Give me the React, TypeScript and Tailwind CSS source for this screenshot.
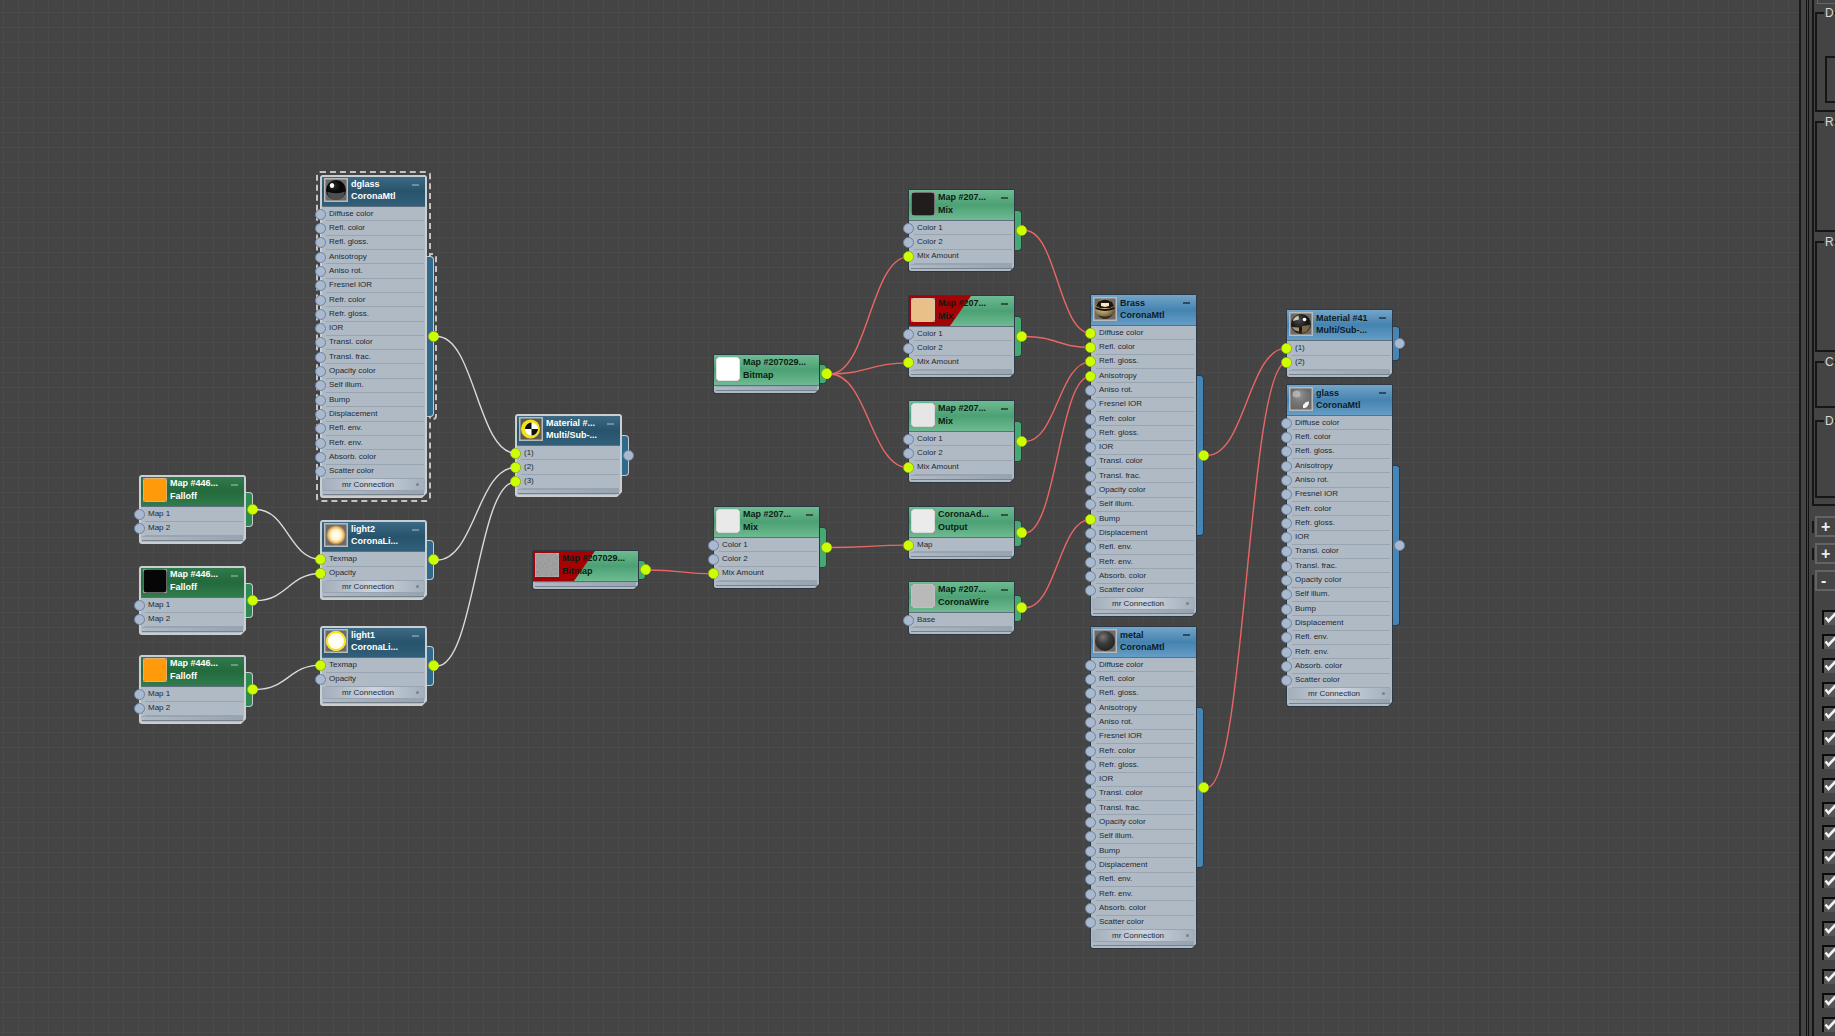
import { useState } from "react";
import clsx from "clsx";

type Tone = "material" | "materialDark" | "map" | "mapDark";

type NodeDef = {
  id: string;
  x: number;
  y: number;
  title: string;
  type: string;
  tone: Tone;
  thumb: string;
  inputs: string[];
  linked?: number[];
  outLinked?: boolean;
  mr?: boolean;
  warn?: boolean;
  active?: boolean;
};

const NODE_W = 107;
const HEADER_H = 32;
const MR_H = 11;
const FOOTER_H = 8;

const CORONA = [
  "Diffuse color",
  "Refl. color",
  "Refl. gloss.",
  "Anisotropy",
  "Aniso rot.",
  "Fresnel IOR",
  "Refr. color",
  "Refr. gloss.",
  "IOR",
  "Transl. color",
  "Transl. frac.",
  "Opacity color",
  "Self illum.",
  "Bump",
  "Displacement",
  "Refl. env.",
  "Refr. env.",
  "Absorb. color",
  "Scatter color",
];
const MIX = ["Color 1", "Color 2", "Mix Amount"];
const FALLOFF = ["Map 1", "Map 2"];
const LIGHT = ["Texmap", "Opacity"];

const NODES: NodeDef[] = [
  { id: "dglass", x: 320, y: 175, title: "dglass", type: "CoronaMtl", tone: "materialDark", thumb: "black-ball", inputs: CORONA, outLinked: true, mr: true, active: true },
  { id: "light2", x: 320, y: 520, title: "light2", type: "CoronaLi...", tone: "materialDark", thumb: "light-warm", inputs: LIGHT, linked: [0, 1], outLinked: true, mr: true },
  { id: "light1", x: 320, y: 626, title: "light1", type: "CoronaLi...", tone: "materialDark", thumb: "light-yellow", inputs: LIGHT, linked: [0], outLinked: true, mr: true },
  { id: "fall1", x: 139, y: 475, title: "Map #446...", type: "Falloff", tone: "mapDark", thumb: "#ff9a0b", inputs: FALLOFF, outLinked: true },
  { id: "fall2", x: 139, y: 566, title: "Map #446...", type: "Falloff", tone: "mapDark", thumb: "#060606", inputs: FALLOFF, outLinked: true },
  { id: "fall3", x: 139, y: 655, title: "Map #446...", type: "Falloff", tone: "mapDark", thumb: "#ff9a0b", inputs: FALLOFF, outLinked: true },
  { id: "multi", x: 515, y: 414, title: "Material #...", type: "Multi/Sub-...", tone: "materialDark", thumb: "checker", inputs: ["(1)", "(2)", "(3)"], linked: [0, 1, 2] },
  { id: "bmpRed", x: 532, y: 550, title: "Map #207029...", type: "Bitmap", tone: "map", thumb: "noise", inputs: [], outLinked: true, warn: true },
  { id: "bmp", x: 713, y: 354, title: "Map #207029...", type: "Bitmap", tone: "map", thumb: "#ffffff", inputs: [], outLinked: true },
  { id: "mix4", x: 713, y: 506, title: "Map #207...", type: "Mix", tone: "map", thumb: "#e9e9e9", inputs: MIX, linked: [2], outLinked: true },
  { id: "mix1", x: 908, y: 189, title: "Map #207...", type: "Mix", tone: "map", thumb: "#211d1c", inputs: MIX, linked: [2], outLinked: true },
  { id: "mix2", x: 908, y: 295, title: "Map #207...", type: "Mix", tone: "map", thumb: "#e8c088", inputs: MIX, linked: [2], outLinked: true, warn: true },
  { id: "mix3", x: 908, y: 400, title: "Map #207...", type: "Mix", tone: "map", thumb: "#e6e6e6", inputs: MIX, linked: [2], outLinked: true },
  { id: "output", x: 908, y: 506, title: "CoronaAd...", type: "Output", tone: "map", thumb: "#ebebeb", inputs: ["Map"], linked: [0], outLinked: true },
  { id: "wire", x: 908, y: 581, title: "Map #207...", type: "CoronaWire", tone: "map", thumb: "#b9b9b9", inputs: ["Base"], outLinked: true },
  { id: "brass", x: 1090, y: 294, title: "Brass", type: "CoronaMtl", tone: "material", thumb: "brass-ball", inputs: CORONA, linked: [0, 1, 2, 3, 13], outLinked: true, mr: true },
  { id: "metal", x: 1090, y: 626, title: "metal", type: "CoronaMtl", tone: "material", thumb: "metal-ball", inputs: CORONA, outLinked: true, mr: true },
  { id: "mat41", x: 1286, y: 309, title: "Material #41", type: "Multi/Sub-...", tone: "material", thumb: "multi-ball", inputs: ["(1)", "(2)"], linked: [0, 1] },
  { id: "glass", x: 1286, y: 384, title: "glass", type: "CoronaMtl", tone: "material", thumb: "glass-ball", inputs: CORONA, mr: true },
];

const WIRES: [string, string, number][] = [
  ["dglass", "multi", 0],
  ["light2", "multi", 1],
  ["light1", "multi", 2],
  ["fall1", "light2", 0],
  ["fall2", "light2", 1],
  ["fall3", "light1", 0],
  ["bmpRed", "mix4", 2],
  ["mix4", "output", 0],
  ["bmp", "mix1", 2],
  ["bmp", "mix2", 2],
  ["bmp", "mix3", 2],
  ["mix1", "brass", 0],
  ["mix2", "brass", 1],
  ["mix3", "brass", 2],
  ["output", "brass", 3],
  ["wire", "brass", 13],
  ["brass", "mat41", 0],
  ["metal", "mat41", 1],
];

const HEADER: Record<Tone, string> = {
  material: "bg-linear-to-b from-[#74a5c9] via-[#4583b0] to-[#659dc6] text-[#0d1a26]",
  materialDark: "bg-linear-to-b from-[#3c6a84] via-[#28536c] to-[#315f79] text-white",
  map: "bg-linear-to-b from-[#6fba92] via-[#4ba173] to-[#6fba92] text-[#0b1c12]",
  mapDark: "bg-linear-to-b from-[#307a4b] via-[#236a3d] to-[#317c4c] text-white",
};

const TAB: Record<Tone, string> = {
  material: "bg-[#4686b6] border-[#2a3b48]",
  materialDark: "bg-[#2f6a8d] border-[#c6cbd0]",
  map: "bg-[#46a873] border-[#2b4437]",
  mapDark: "bg-[#2c8a50] border-[#c6cbd0]",
};

function rowsHeight(n: number) {
  return Math.round((n * 43) / 3);
}

function nodeHeight(n: NodeDef) {
  return HEADER_H + rowsHeight(n.inputs.length) + (n.mr ? MR_H : 0) + FOOTER_H;
}

function outPort(n: NodeDef) {
  return { x: n.x + NODE_W + 7, y: n.y + nodeHeight(n) / 2 };
}

function inPort(n: NodeDef, slot: number) {
  return { x: n.x + 0.5, y: n.y + HEADER_H + ((slot + 0.5) * 43) / 3 };
}

function wirePath(from: NodeDef, to: NodeDef, slot: number) {
  const a = outPort(from);
  const b = inPort(to, slot);
  const x1 = a.x + 3;
  const c = (b.x - x1) * 0.48;
  return `M${x1} ${a.y} C${x1 + c} ${a.y} ${b.x - c} ${b.y} ${b.x} ${b.y}`;
}

function Ball({
  id,
  stops,
  centered,
  children,
}: {
  id: string;
  stops: [string, string][];
  centered?: boolean;
  children?: React.ReactNode;
}) {
  return (
    <svg viewBox="0 0 24 24" className="size-6">
      <defs>
        <radialGradient id={id} cx={centered ? "0.5" : "0.4"} cy={centered ? "0.5" : "0.3"} r={centered ? "0.5" : "0.75"}>
          {stops.map(([o, c]) => (
            <stop key={o} offset={o} stopColor={c} />
          ))}
        </radialGradient>
      </defs>
      <rect width="24" height="24" fill="#b9b9b9" />
      <rect x="1.5" y="1.5" width="21" height="21" fill="#6d6a68" />
      <circle cx="12" cy="12" r="10" fill={`url(#${id})`} />
      {children}
    </svg>
  );
}

function Thumb({ kind }: { kind: string }) {
  switch (kind) {
    case "black-ball":
      return (
        <Ball id="g-black" stops={[["0", "#2a2a2a"], ["0.5", "#050505"], ["1", "#1c1c1c"]]}>
          <path d="M3 13q9 4 18 0l-1 4q-3 5-8 5t-8-5z" fill="#4e4e50" />
          <path d="M2.500 11.500q9.500 3 19 0v2q-9.500 3.500-19 0z" fill="#0a0a0a" />
          <ellipse cx="8" cy="7.500" rx="2.200" ry="2.600" fill="#fff" />
        </Ball>
      );
    case "brass-ball":
      return (
        <Ball id="g-brass" stops={[["0", "#f0dfb4"], ["0.5", "#b59a68"], ["1", "#4a3c26"]]}>
          <path d="M5 5q7-5 14 0l2 4-4 2H7L3 9z" fill="#1a1712" />
          <path d="M8 6h8v3l-4 1-4-1z" fill="#f5e9c8" />
          <path d="M2.500 10q9.500 4 19 0v2q-9.500 4-19 0z" fill="#17120c" />
          <path d="M5 18q7 3 14 0-3 4-7 4t-7-4z" fill="#3b2f1d" />
        </Ball>
      );
    case "metal-ball":
      return <Ball id="g-metal" stops={[["0", "#777"], ["0.45", "#3c3c3c"], ["1", "#202020"]]} />;
    case "multi-ball":
      return (
        <Ball id="g-multi" stops={[["0", "#4a4a4a"], ["0.6", "#141414"], ["1", "#2a2a2a"]]}>
          <path d="M4.500 7q2-3 5-3.500l.5 4-6 1.500z" fill="#cfc6b2" />
          <path d="M13 14l8-1q-1 7-8 8z" fill="#7d6842" />
          <path d="M3 15l7 .5v4q-5-.5-7-4.500z" fill="#a8946c" />
          <circle cx="15.500" cy="7.500" r="1.800" fill="#fff" />
        </Ball>
      );
    case "glass-ball":
      return (
        <Ball id="g-glass" stops={[["0", "#969696"], ["0.5", "#777"], ["1", "#666"]]}>
          <ellipse cx="7.500" cy="7" rx="4" ry="3.500" fill="#c0c0c0" opacity="0.700" />
          <path d="M14 18l3-3 3-.5q.5 3-2 5.500-2 1.500-4 1z" fill="#f3f3f3" />
        </Ball>
      );
    case "light-warm":
      return <Ball id="g-warm" centered stops={[["0", "#fffef5"], ["0.5", "#fff6d0"], ["0.75", "#f3c26c"], ["1", "#7d6a58"]]} />;
    case "light-yellow":
      return (
        <Ball id="g-yellow" centered stops={[["0", "#ffffff"], ["1", "#fffbe0"]]}>
          <circle cx="12" cy="12" r="9" fill="none" stroke="#f2e51f" strokeWidth="2" />
        </Ball>
      );
    case "checker":
      return (
        <svg viewBox="0 0 24 24" className="size-6">
          <rect width="24" height="24" fill="#b9b9b9" />
          <rect x="1.500" y="1.500" width="21" height="21" fill="#5c5a50" />
          <circle cx="11.500" cy="12" r="9.500" fill="#f2e21a" />
          <circle cx="12.500" cy="12" r="6.500" fill="#fff" />
          <path d="M12.500 5.500v6.500H6a6.500 6.500 0 0 1 6.500-6.500zM12.500 18.500V12H19a6.500 6.500 0 0 1-6.500 6.500z" fill="#101010" />
        </svg>
      );
    case "noise":
      return (
        <svg viewBox="0 0 24 24" className="size-6">
          <filter id="grain">
            <feTurbulence type="fractalNoise" baseFrequency="0.5" numOctaves="2" />
            <feColorMatrix type="saturate" values="0" />
            <feComponentTransfer>
              <feFuncA type="linear" slope="0" intercept="0.25" />
            </feComponentTransfer>
          </filter>
          <rect width="24" height="24" fill="#b0b0b0" />
          <rect x="0.500" y="0.500" width="23" height="23" rx="2" fill="#949494" />
          <rect x="1" y="1" width="22" height="22" filter="url(#grain)" />
        </svg>
      );
    default:
      return (
        <svg viewBox="0 0 24 24" className="size-6">
          <rect width="24" height="24" fill="#c3c9c6" />
          <path d="M0 0h2v2H0zM22 0h2v2h-2zM0 22h2v2H0zM22 22h2v2h-2z" fill="#a58f94" />
          <rect x="0.500" y="0.500" width="23" height="23" rx="3" fill={kind} />
        </svg>
      );
  }
}

function Port({ on }: { on?: boolean }) {
  return (
    <span
      className={clsx(
        "block size-[11px] shrink-0 rounded-full border",
        on ? "border-[#8fae1c] bg-[#ccff00]" : "border-[#6e83a0] bg-[#a9b9d0]"
      )}
    />
  );
}

function MaterialNode({ node }: { node: NodeDef }) {
  const [open, setOpen] = useState(true);
  const selected = node.tone === "materialDark" || node.tone === "mapDark";
  const isMap = node.tone === "map" || node.tone === "mapDark";

  return (
    <section className="absolute w-[107px]" style={{ left: node.x, top: node.y }}>
      {/* Selection outline */}
      {node.active && (
        <>
          <div className="absolute left-full top-1/4 -mt-[3px] h-[calc(50%+6px)] w-[10px] rounded-r-[4px] border-2 border-l-0 border-dashed border-[#c4c4c4]" />
          <div className="absolute -inset-[4px] rounded-[4px] border-2 border-dashed border-[#c4c4c4] bg-[#444444]" />
        </>
      )}

      {/* Output tab */}
      <div
        className={clsx(
          "absolute left-full top-1/4 -ml-[2px] h-1/2 w-[9px] rounded-r-[4px] border border-l-0",
          TAB[node.tone]
        )}
      />

      {/* Frame with the cut corner */}
      <div
        className={clsx(
          "absolute inset-0 rounded-[3px] [clip-path:polygon(0_0,100%_0,100%_calc(100%-5px),calc(100%-5px)_100%,0_100%)]",
          selected ? "bg-[#c9ced3]" : "bg-[#2c3843]"
        )}
      />
      <div
        className={clsx(
          "absolute rounded-[2px] bg-[#b0bac5] [clip-path:polygon(0_0,100%_0,100%_calc(100%-4px),calc(100%-4px)_100%,0_100%)]",
          selected ? "inset-[2px]" : "inset-px"
        )}
      />

      <header
        className={clsx(
          "relative flex h-8 items-start overflow-hidden border-b border-b-[#5d6f7c]",
          selected ? "mx-[2px] border-t-2 border-t-[#c9ced3] pt-px pl-[2px]" : "mx-px border-t border-t-[#2c3843] pt-[2px] pl-[2px]",
          HEADER[node.tone]
        )}
      >
        {node.warn && <div className="absolute inset-0 bg-[#a50206] [clip-path:polygon(0_0,59%_0,39%_100%,0_100%)]" />}
        <div className="relative shrink-0">
          <Thumb kind={node.thumb} />
        </div>
        <h2 className={clsx("relative pl-[3px] text-[9px] font-bold whitespace-nowrap", isMap ? "-mt-px leading-[13px]" : "leading-[12px]")}>
          <span className="block">{node.title}</span>
          <span className="block">{node.type}</span>
        </h2>
        {node.inputs.length > 0 && (
          <button
            type="button"
            aria-label="Collapse node"
            onClick={() => setOpen(!open)}
            className="absolute right-[5px] top-1 flex h-2 w-[9px] items-center justify-center"
          >
            <span className={clsx("block h-[2px] w-[7px]", selected ? "bg-white/30" : "bg-black/50")} />
          </button>
        )}
      </header>

      {open && (
        <ul className="relative grid auto-rows-fr" style={{ height: rowsHeight(node.inputs.length) }}>
          {node.inputs.map((name, i) => (
            <li key={name} className="-ml-[5px] flex items-center">
              <Port on={node.linked?.includes(i)} />
              <span className="mr-[3px] flex h-full flex-1 items-center border-b border-[#98a4b1] pl-[3px] text-[8px] leading-none text-[#1f2933]">
                {name}
              </span>
            </li>
          ))}
        </ul>
      )}

      {node.mr && (
        <div className="relative mx-[2px] flex h-[11px] items-center justify-between bg-linear-to-r from-[#a3aebb] via-[#ccd5df] to-[#a3aebb] pr-[6px] pl-5 text-[8px] leading-none text-[#1f2933]">
          mr Connection
          <span className="size-[3px] rounded-full bg-[#77838f]" />
        </div>
      )}

      {/* Resize strip */}
      <div className="relative mx-[3px] h-2">
        <div className="h-[5px] border-y border-t-[#98a4b1] border-b-[#76838f] bg-linear-to-r from-[#b0bac5] to-[#97a3af]" />
      </div>

      <div className="absolute left-full top-1/2 -mt-[6px] ml-px">
        <Port on={node.outLinked} />
      </div>
    </section>
  );
}

function GraphView() {
  const byId = Object.fromEntries(NODES.map((n) => [n.id, n]));
  return (
    <main className="relative min-w-0 flex-1 overflow-hidden bg-[#444444] bg-[linear-gradient(to_right,#4a4a4a_1px,transparent_1px),linear-gradient(to_bottom,#4a4a4a_1px,transparent_1px)] bg-[size:15px_15px] bg-[position:3px_12px]">
      {NODES.map((n) => (
        <MaterialNode key={n.id} node={n} />
      ))}
      <svg className="pointer-events-none absolute inset-0 size-full" fill="none" strokeWidth="1.400">
        {WIRES.map(([from, to, slot]) => {
          const light = byId[to].tone === "materialDark";
          const a = outPort(byId[from]);
          const b = inPort(byId[to], slot);
          return (
            <g key={`${from}-${to}-${slot}`}>
              <path d={wirePath(byId[from], byId[to], slot)} stroke={light ? "#dadada" : "#ea6665"} />
              <circle cx={a.x} cy={a.y} r="4.500" fill="#ccff00" />
              <circle cx={b.x} cy={b.y} r="4.500" fill="#ccff00" />
            </g>
          );
        })}
      </svg>
    </main>
  );
}

function Group({ label, className, children }: { label: string; className: string; children?: React.ReactNode }) {
  return (
    <fieldset className={clsx("ml-px min-w-0 shrink-0 border-2 border-r-0 border-[#161616]", className)}>
      <legend className="ml-[7px] pl-px text-[12px] leading-[14px] text-[#d8d8d8]">{label}</legend>
      {children}
    </fieldset>
  );
}

function Rollout({ sign }: { sign: string }) {
  return (
    <div className="flex h-[21px] shrink-0 items-center">
      <span className="h-3 w-1 border-2 border-r-0 border-[#161616]" />
      <button type="button" className="ml-px h-[21px] w-6 shrink-0 border-2 border-[#636363] pl-[4px] text-left text-[16px] leading-none font-bold text-[#eeeeee]">
        {sign}
      </button>
    </div>
  );
}

function ParameterPanel() {
  return (
    <aside className="flex w-9 shrink-0 overflow-hidden bg-[#444444]">
      <div className="w-[7px] shrink-0 border-l-2 border-[#191919]" />
      <div className="mr-[3px] w-[3px] shrink-0 border-x border-[#111111]" />
      <div className="flex min-w-0 flex-1 flex-col">
        <div className="flex h-[506px] shrink-0 flex-col border-b-2 border-l-2 border-[#161616]">
          <div className="ml-[3px] h-1 shrink-0 border-b border-l border-[#666666]" />
          <Group label="D" className="mt-[2px] h-[106px]">
            <div className="ml-2 mt-[36px] h-[47px] border-2 border-r-0 border-[#161616]" />
          </Group>
          <Group label="R" className="mt-[3px] h-[117px]" />
          <Group label="R" className="mt-[3px] h-[117px]" />
          <Group label="C" className="mt-[3px] h-[53px]" />
          <Group label="D" className="mt-[6px] h-[84px]" />
        </div>
        <div className="mt-[10px] flex shrink-0 flex-col gap-[6px]">
          <Rollout sign="+" />
          <Rollout sign="+" />
          <Rollout sign="-" />
        </div>
        <div className="-mt-[10px] flex min-h-0 flex-1 flex-col justify-between border-l-2 border-[#161616] pt-[29px] pb-1">
          {Array.from({ length: 18 }, (_, i) => (
            <label key={i} className="relative ml-2 block size-[15px] shrink-0">
              <input
                type="checkbox"
                defaultChecked
                aria-label={`Enable map ${i + 1}`}
                className="peer block size-[15px] appearance-none border-t-2 border-l-2 border-[#0c0c0c] bg-[#565656]"
              />
              <svg viewBox="0 0 15 15" className="pointer-events-none absolute inset-0 hidden size-[15px] peer-checked:block">
                <path d="M3.500 7.500l3 3.500 7-7.500" fill="none" stroke="#f2f2f2" strokeWidth="2.600" />
              </svg>
            </label>
          ))}
        </div>
      </div>
    </aside>
  );
}

export default function App() {
  return (
    <div className="flex h-screen overflow-hidden bg-[#444444] font-['Liberation_Sans',Arial,sans-serif]">
      <GraphView />
      <ParameterPanel />
    </div>
  );
}
